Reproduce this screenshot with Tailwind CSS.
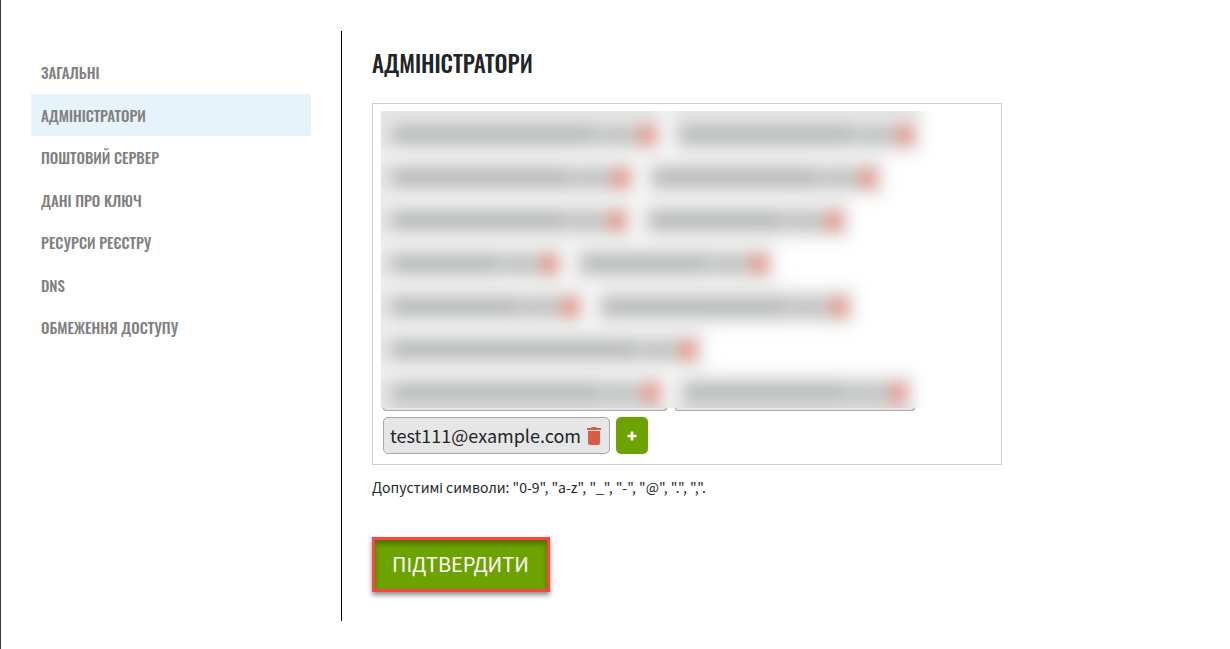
<!DOCTYPE html>
<html lang="uk">
<head>
<meta charset="utf-8">
<meta name="viewport" content="width=device-width, initial-scale=1">
<title>Адміністратори</title>
<script src="https://cdn.jsdelivr.net/npm/@tailwindcss/browser@4"></script>
</head>
<body class="min-h-screen bg-white border-l border-[#3a3a3a] text-[#212529] font-['Noto_Sans_CJK_SC','Noto_Sans',sans-serif]">
<div class="flex items-stretch py-[31px] pl-[30px]">
  <nav class="w-[280px] shrink-0 pt-5 text-[15px] leading-normal font-medium text-[#808080] font-['Oswald','Liberation_Sans_Narrow','Liberation_Sans',sans-serif]" aria-label="Розділи">
    <ul>
      <li><a href="#general" class="block px-2.5 py-2.5">ЗАГАЛЬНІ</a></li>
      <li><a href="#admins" aria-current="page" class="block px-2.5 py-2.5 bg-[#e6f3fb]">АДМІНІСТРАТОРИ</a></li>
      <li><a href="#mail" class="block px-2.5 py-2.5">ПОШТОВИЙ СЕРВЕР</a></li>
      <li><a href="#key" class="block px-2.5 py-2.5">ДАНІ ПРО КЛЮЧ</a></li>
      <li><a href="#resources" class="block px-2.5 py-2.5">РЕСУРСИ РЕЄСТРУ</a></li>
      <li><a href="#dns" class="block px-2.5 py-2.5">DNS</a></li>
      <li><a href="#access" class="block px-2.5 py-2.5">ОБМЕЖЕННЯ ДОСТУПУ</a></li>
    </ul>
  </nav>
  <main class="ml-[30px] flex-1 border-l border-black pl-[30px] pt-4 pb-[29px]">
    <h1 class="text-[23px] leading-8 font-medium font-['Oswald','Liberation_Sans_Narrow','Liberation_Sans',sans-serif]">АДМІНІСТРАТОРИ</h1>
    <form>
      <div class="mt-6 max-w-[630px] border border-[#cfcddb] px-2 pt-[7px] pb-2.5">
        <div class="max-w-[554px] overflow-hidden" aria-hidden="true">
          <div id="hidden-admins" class="flex h-[297px] flex-col gap-1.5 pt-[5px] pl-0.5 blur-[8px]"></div>
        </div>
        <div class="flex gap-2 pl-0.5" aria-hidden="true">
          <div class="h-[3px] w-[284px] rounded-b-[5px] border-x border-b border-[#a6a6a6] bg-[#e6e6e6]"></div>
          <div class="h-[3px] w-[240px] rounded-b-[5px] border-x border-b border-[#a6a6a6] bg-[#e6e6e6]"></div>
        </div>
        <div class="mt-1.5 flex gap-1.5 pl-0.5">
          <div class="flex h-[37px] items-center gap-1.5 rounded-[5px] border border-[#a6a6a6] bg-[#e6e6e6] pr-2 pl-1.5 text-[18px] leading-[30px]">
            <span class="pb-0.5">test111@example.com</span>
            <button type="button" aria-label="Видалити test111@example.com">
              <svg class="block h-[18px] w-[14px]" viewBox="0 0 14 18" fill="#d75d47"><path d="M1 4h12v12a2 2 0 0 1-2 2H3a2 2 0 0 1-2-2zM0 1h4l1-1h4l1 1h4v2H0z"/></svg>
            </button>
          </div>
          <button type="button" aria-label="Додати" class="flex h-[37px] w-8 items-center justify-center rounded-[5px] bg-[#6ca300]">
            <svg class="size-2.5" viewBox="0 0 10 10" fill="white"><path d="M3.7 0.5h2.6v3.2h3.2v2.6H6.3v3.2H3.7V6.3H0.5V3.7h3.2z"/></svg>
          </button>
        </div>
      </div>
      <p class="mt-3 text-[14px] leading-[21px] [font-feature-settings:'palt','kern']">Допустимі символи: "0-9", "a-z", "_", "-", "@", ".", ",".</p>
      <button type="submit" class="mt-[39px] flex h-[55px] items-center border-3 border-[#ff4343] bg-[#6ca300] pr-[18px] pb-0.5 pl-[17px] text-[20px] leading-7 text-white shadow-[inset_0_4px_5px_rgba(0,0,0,0.3),0_3px_5px_rgba(0,0,0,0.45)]">ПІДТВЕРДИТИ</button>
    </form>
  </main>
</div>
<template id="chip">
  <div class="flex h-[37px] shrink-0 items-center gap-0.5 bg-[#e5e5e5] px-[9px]">
    <span class="h-[17px] flex-1 bg-[#b5b7b8]"></span>
    <span class="h-4 w-10 bg-[#bcbebf]"></span>
    <span class="h-[18px] w-3.5 bg-[#e6826f]"></span>
  </div>
</template>
<script>
  const rows = [[280, 250], [254, 239], [250, 209], [182, 202], [203, 261], [321], [284, 239]];
  const host = document.getElementById('hidden-admins');
  const chip = document.getElementById('chip').content.firstElementChild;
  rows.forEach((widths, r) => {
    const row = document.createElement('div');
    row.className = 'flex gap-2';
    widths.forEach((w, i) => {
      const el = chip.cloneNode(true);
      el.style.width = w + 'px';
      const shadows = [];
      if (i === 0) shadows.push('-24px 0 0 #e5e5e5');
      if (r === 0) shadows.push('0 -24px 0 #e5e5e5');
      if (r === 0 && i === 0) shadows.push('-24px -24px 0 #e5e5e5');
      if (r === rows.length - 1) shadows.push('0 24px 0 #d0d0d0');
      el.style.boxShadow = shadows.join(',');
      row.append(el);
    });
    host.append(row);
  });
</script>
</body>
</html>
